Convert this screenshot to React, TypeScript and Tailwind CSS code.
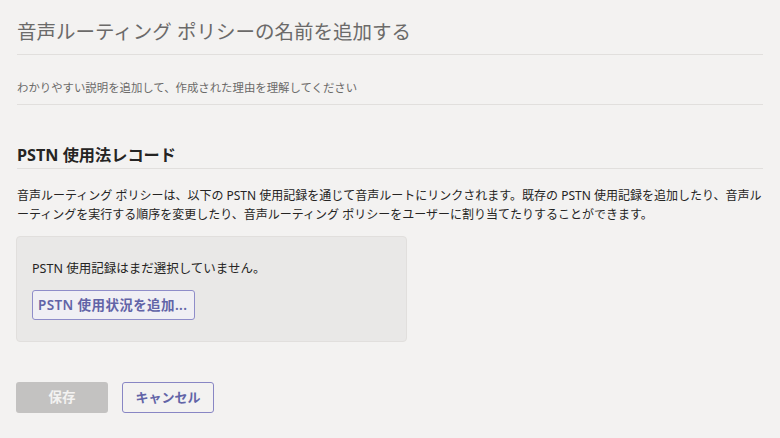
export default function App() {
  return (
    <div className="min-h-[438px] w-[780px] bg-[#f3f2f1] font-['Noto_Sans','Noto_Sans_CJK_JP',sans-serif] text-[#252423]">
      <div className="ml-[17px] w-[746px]">
        {/* name */}
        <div className="border-b border-[#e1dfdd] pb-[8px] pt-[18px]">
          <h1 className="text-[19.5px] leading-[28px] text-[#6b6a69]">
            音声ルーティング ポリシーの名前を追加する
          </h1>
        </div>

        {/* description */}
        <div className="border-b border-[#e1dfdd] pb-[8px] pt-[25px]">
          <p className="text-[11.4px] leading-[16px] text-[#6b6a69]">
            わかりやすい説明を追加して、作成された理由を理解してください
          </p>
        </div>

        {/* PSTN usage */}
        <div className="mt-[39px] border-b border-[#e1dfdd] pb-[2px]">
          <h2 className="text-[16.2px] font-bold leading-[22px] text-[#252423]">
            PSTN 使用法レコード
          </h2>
        </div>

        <p className="mt-[17px] text-[12px] leading-[19px] text-[#252423]">
          音声ルーティング ポリシーは、以下の PSTN 使用記録を通じて音声ルートにリンクされます。既存の PSTN 使用記録を追加したり、音声ル
          <br />
          ーティングを実行する順序を変更したり、音声ルーティング ポリシーをユーザーに割り当てたりすることができます。
        </p>
      </div>

      <div className="ml-[16px] mt-[12px] w-[391px] rounded-[4px] border border-[#e1dfdd] bg-[#e9e8e7] pb-[21px] pl-[15px] pt-[23px]">
        <p className="text-[12.5px] leading-[18px] text-[#252423]">
          PSTN 使用記録はまだ選択していません。
        </p>
        <button className="mt-[12px] flex h-[30px] w-[163px] items-center rounded-[3px] border-[1.5px] border-[#8f8dc9] bg-[#f0eff4] px-[5px] text-[13.5px] font-semibold tracking-[0.4px] text-[#6264a7]">
          PSTN 使用状況を追加...
        </button>
      </div>

      <div className="ml-[16px] mt-[40px] flex gap-[14px] pb-[26px]">
        <button className="flex h-[31px] w-[92px] items-center justify-center rounded-[3px] bg-[#c3c2c1] text-[13.5px] font-bold text-[#f3f2f1]">
          保存
        </button>
        <button className="flex h-[31px] w-[92px] items-center justify-center rounded-[3px] border-[1.5px] border-[#8886c4] bg-[#f3f2f1] text-[13px] font-bold text-[#6264a7]">
          キャンセル
        </button>
      </div>
    </div>
  );
}
